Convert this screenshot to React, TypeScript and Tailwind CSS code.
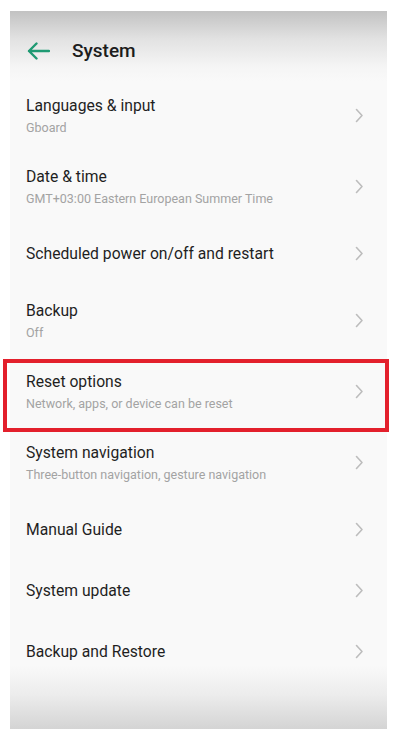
import React from "react";

type Row = { title: string; sub?: string; h: number };

const rows: Row[] = [
  { title: "Languages & input", sub: "Gboard", h: 72 },
  { title: "Date & time", sub: "GMT+03:00 Eastern European Summer Time", h: 70 },
  { title: "Scheduled power on/off and restart", h: 64 },
  { title: "Backup", sub: "Off", h: 70 },
  { title: "Reset options", sub: "Network, apps, or device can be reset", h: 72 },
  { title: "System navigation", sub: "Three-button navigation, gesture navigation", h: 70 },
  { title: "Manual Guide", h: 64 },
  { title: "System update", h: 58 },
  { title: "Backup and Restore", h: 64 },
];

function Chevron() {
  return (
    <svg width="9" height="15" viewBox="0 0 9 15" fill="none">
      <path d="M1.5 1.5 L7 7.5 L1.5 13.5" stroke="#bdbdbd" strokeWidth="1.6" strokeLinecap="round" strokeLinejoin="round" />
    </svg>
  );
}

export default function App() {
  return (
    <div className="w-[400px] h-[729px] bg-white overflow-hidden relative" style={{ fontFamily: "Roboto, 'Noto Sans', sans-serif" }}>
      <div className="ml-[10px] mt-[11px] w-[377px] h-[718px] flex flex-col bg-[linear-gradient(to_bottom,#c2c2c2_0px,#e2e2e2_28px,#f5f5f5_56px,#f9f9f9_70px,#f9f9f9_655px,#ececec_684px,#d4d4d4_718px)]">
        <div className="h-[68px] flex items-center pl-[16px] pt-[12px] gap-[22px]">
          <svg width="24" height="20" viewBox="0 0 24 20" fill="none">
            <path d="M23 10 H3 M10.5 2.5 L3 10 L10.5 17.5" stroke="#1f9a73" strokeWidth="2.4" strokeLinecap="round" strokeLinejoin="round" />
          </svg>
          <span className="text-[19px] text-[#1c1c1c] font-medium">System</span>
        </div>
        {rows.map((r) => (
          <div key={r.title} className="flex items-center pl-4 pr-[23px]" style={{ height: r.h }}>
            <div className="flex-1 flex flex-col pt-[1px]">
              <span className="text-[15.7px] leading-[20px] text-[#1f1f1f]">{r.title}</span>
              {r.sub && <span className="text-[12.5px] leading-[17px] mt-[3px] text-[#a3a3a3]">{r.sub}</span>}
            </div>
            <Chevron />
          </div>
        ))}
      </div>
      <div className="absolute left-[3px] top-[359px] w-[386px] h-[73px] border-[4px] border-[#e3202c]" />
    </div>
  );
}
